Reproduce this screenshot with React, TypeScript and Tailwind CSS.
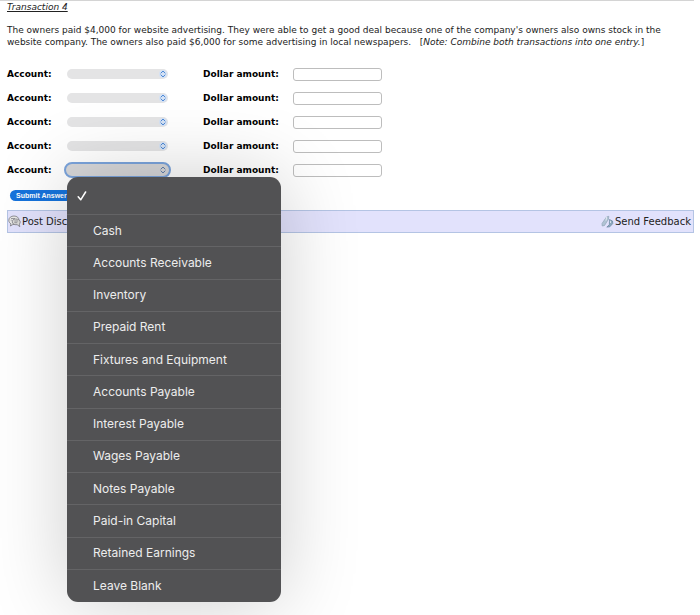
import { useState } from "react";

const accounts = [
  "Cash",
  "Accounts Receivable",
  "Inventory",
  "Prepaid Rent",
  "Fixtures and Equipment",
  "Accounts Payable",
  "Interest Payable",
  "Wages Payable",
  "Notes Payable",
  "Paid-in Capital",
  "Retained Earnings",
  "Leave Blank",
];

function Chevrons({ open }: { open: boolean }) {
  return (
    <svg
      viewBox="0 0 8 10"
      className={
        open
          ? "pointer-events-none absolute top-1 right-1 h-2 w-2 text-[#5577a8]"
          : "pointer-events-none absolute top-px right-px h-2 w-2 rounded-full bg-[#d5e2f4] text-[#3f80d4]"
      }
      fill="none"
      stroke="currentColor"
      strokeWidth="1.2"
      strokeLinecap="round"
      strokeLinejoin="round"
      aria-hidden="true"
    >
      <path d="M1.5 3.8 4 1.3l2.5 2.5M1.5 6.2 4 8.7l2.5-2.5" />
    </svg>
  );
}

function AccountMenu({ value, onPick }: { value: string; onPick: (name: string) => void }) {
  return (
    <div
      role="listbox"
      aria-label="Account"
      className="absolute top-full left-[3px] z-10 -mt-px grid h-[425px] w-[214px] auto-rows-fr grid-rows-[38px] rounded-[11px] bg-[#525254] font-['Inter','Liberation_Sans',sans-serif] text-xs font-normal text-[#ededed] shadow-[0_0_80px_rgba(0,0,0,0.2)]"
    >
      {["", ...accounts].map((name) => (
        <button
          key={name}
          type="button"
          role="option"
          aria-selected={name === value}
          aria-label={name || "No account"}
          onClick={() => onPick(name)}
          className="flex items-center border-b border-[#646466] text-left last:border-b-0"
        >
          <span className="flex w-[26px] shrink-0 pl-2.5">
            {name === value && (
              <svg
                viewBox="0 0 10 10"
                className="h-2.5 w-2.5"
                fill="none"
                stroke="white"
                strokeWidth="1.5"
                strokeLinecap="round"
                strokeLinejoin="round"
                aria-hidden="true"
              >
                <path d="M1.2 5.8 3.7 8.8 8.6 1" />
              </svg>
            )}
          </span>
          {name}
        </button>
      ))}
    </div>
  );
}

function EntryRow({ index, open }: { index: number; open: boolean }) {
  const [account, setAccount] = useState("");
  return (
    <div className="flex h-6 items-center font-bold">
      <label htmlFor={`account-${index}`} className="w-[57px] shrink-0">
        Account:
      </label>
      <div className="w-[139px] shrink-0">
        <div className={open ? "relative w-[107px]" : "relative ml-[3px] w-[101px]"}>
          <select
            id={`account-${index}`}
            value={account}
            onChange={(e) => setAccount(e.target.value)}
            className={
              open
                ? "block h-4 w-full appearance-none rounded-full border-2 border-[#7ba4dc] bg-[#d8d8da] outline-none"
                : "block h-2.5 w-full appearance-none rounded-full bg-[#e4e4e5] outline-none"
            }
          >
            <option value="" />
            {accounts.map((name) => (
              <option key={name}>{name}</option>
            ))}
          </select>
          <Chevrons open={open} />
          {open && <AccountMenu value={account} onPick={setAccount} />}
        </div>
      </div>
      <label htmlFor={`amount-${index}`} className="w-[90px] shrink-0">
        Dollar amount:
      </label>
      <input
        id={`amount-${index}`}
        type="text"
        className="h-[13px] w-[89px] rounded-[3px] border border-[#bdbdbd] bg-transparent px-1 font-normal outline-none"
      />
    </div>
  );
}

function DiscussionIcon() {
  return (
    <svg viewBox="0 0 13 13" className="h-[13px] w-[13px]" fill="none" stroke="#77777f" aria-hidden="true">
      <path d="M6 1C3 1 .8 2.8.8 5.3c0 1.6.9 2.8 2.2 3.6L2.4 11l2.5-1.5C8.600 9.700 11 8 11 5.300 11 2.800 9 1 6 1Z" fill="#e9e9e7" strokeWidth=".8" />
      <path d="M7.500 4C5.500 4 4.300 5.200 4.300 6.800s1.400 2.900 3.400 2.900h1.500l2.600 2-.5-2.600c.6-.6.9-1.300.9-2.200C12.200 5.200 10.200 4 7.500 4Z" fill="#dcdcd9" strokeWidth=".8" />
      <path d="M3 3.500h4M2.800 5.200h1M6.300 6h3.800M6.300 7.700h3" strokeWidth=".7" />
    </svg>
  );
}

function FeedbackIcon() {
  return (
    <svg viewBox="0 0 13 13" className="h-[13px] w-[13px]" strokeLinejoin="round" aria-hidden="true">
      <path d="M1 8.500 5.500 2l2.300-.7-.4 3L3.500 10.500 1.200 11Z" fill="#b0c3d4" stroke="#8fa3b6" strokeWidth=".7" />
      <path d="M5.500 2 5 5.500" fill="none" stroke="#f4f8fb" strokeWidth=".8" />
      <path d="M8.500 4.500 11.500 6l.3 2.500-3 3.300-3 .3 2.500-2.300Z" fill="#8ca8bd" stroke="#66839c" strokeWidth=".7" />
      <path d="M9.300 5.800 9.600 8" fill="none" stroke="#edf3f7" strokeWidth=".8" />
    </svg>
  );
}

export default function App() {
  return (
    <main className="min-h-screen overflow-hidden bg-white pr-1.5 pl-[7px] font-['DejaVu_Sans',Verdana,sans-serif] text-[9px] leading-3 text-black">
      <div className="-ml-[7px] h-px bg-[#d4d4d4]" />
      <h1 className="text-[#222] italic underline">Transaction 4</h1>
      <p className="mt-[11px] text-[#222]">
        The owners paid $4,000 for website advertising. They were able to get a good deal because one of the company's
        owners also owns stock in the
        <br />
        website company. The owners also paid $6,000 for some advertising in local newspapers. &nbsp; [
        <i>Note: Combine both transactions into one entry.</i>]
      </p>
      <form className="mt-[14px]" onSubmit={(e) => e.preventDefault()}>
        {[1, 2, 3, 4, 5].map((n) => (
          <EntryRow key={n} index={n} open={n === 5} />
        ))}
        <button
          type="submit"
          className="mt-2 ml-[3px] block h-[11px] rounded-full bg-[#1673dc] px-1.5 font-['Liberation_Sans',sans-serif] text-[7px] leading-none font-bold text-white"
        >
          Submit Answer
        </button>
      </form>
      <footer className="mt-[9px] flex h-[23px] items-center justify-between border border-[#b4c4e4] bg-[#e2e2fc] pr-0.5 text-[10px] text-[#222]">
        <a href="#discussion" className="flex items-center gap-px">
          <DiscussionIcon />
          Post Discussion
        </a>
        <a href="#feedback" className="flex items-center gap-px">
          <FeedbackIcon />
          Send Feedback
        </a>
      </footer>
    </main>
  );
}
